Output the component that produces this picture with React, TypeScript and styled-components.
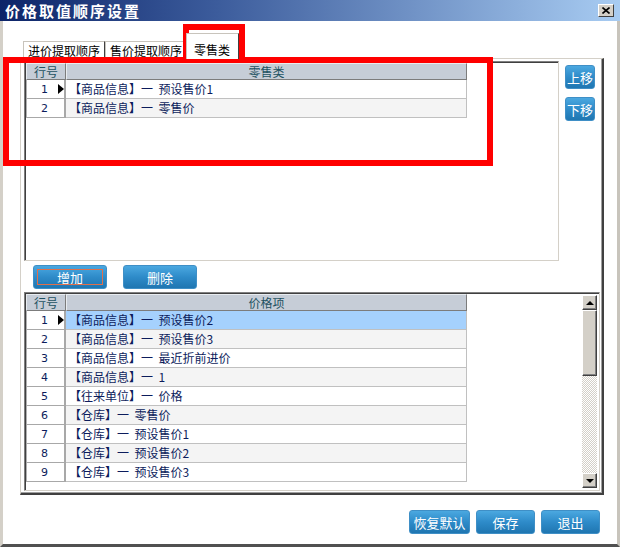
import React from 'react';
import styled, { createGlobalStyle } from 'styled-components';

const GlobalStyle = createGlobalStyle`
  html, body { margin: 0; padding: 0; background: #fff; }
  body {
    font-family: "Noto Sans CJK SC", "DejaVu Sans", sans-serif;
    font-size: 12px;
  }
  * { box-sizing: border-box; }
`;

const Window = styled.div`
  position: relative;
  width: 620px;
  height: 547px;
  background: #fff;
  display: flex;
  flex-direction: column;
  overflow: hidden;
`;

const TitleBar = styled.div`
  height: 21px;
  flex-shrink: 0;
  background: linear-gradient(to right, #0c2468 0%, #3c5c9c 35%, #a8ccf2 100%);
  display: flex;
  align-items: center;
  justify-content: space-between;
  padding: 0 6px 0 5px;
`;

const Title = styled.span`
  color: #fff;
  font-weight: bold;
  font-size: 15px;
  letter-spacing: 2px;
  line-height: 1;
  white-space: nowrap;
`;

const CloseButton = styled.div`
  width: 16px;
  height: 13px;
  background: #d4d0c8;
  border: 1px solid;
  border-color: #fff #404040 #404040 #fff;
  display: flex;
  align-items: center;
  justify-content: center;
`;

const Body = styled.div`
  flex: 1;
  display: flex;
  flex-direction: column;
  border-left: 3px solid #d4d0c8;
  border-right: 3px solid #c8c4bc;
  border-bottom: 3px solid #505050;
  padding-left: 17px;
`;

const TabStrip = styled.div`
  margin-top: 12px;
  height: 25px;
  display: flex;
  align-items: flex-end;
  padding-left: 3px;
`;

const Tab = styled.div<{ $active?: boolean; $w: number }>`
  position: relative;
  width: ${p => p.$w}px;
  height: ${p => (p.$active ? 26 : 17)}px;
  margin-bottom: ${p => (p.$active ? -1 : 0)}px;
  margin-left: ${p => (p.$active ? -1 : 0)}px;
  background: #fff;
  border-top: 1px solid #c8c4bc;
  border-left: 1px solid #c8c4bc;
  border-right: 1px solid #404040;
  color: #000;
  font-size: 12px;
  line-height: 15px;
  padding: ${p => (p.$active ? '8px 0 0 7px' : '1px 0 0 4px')};
  white-space: nowrap;
  overflow: hidden;
  z-index: ${p => (p.$active ? 1 : 0)};
`;

const TabPage = styled.div`
  width: 584px;
  height: 437px;
  border-top: 1px solid #d4d0c8;
  border-left: 1px solid #d4d0c8;
  border-right: 2px solid #404040;
  border-bottom: 2px solid #404040;
  box-shadow: inset -1px -1px #a0a0a0;
  padding: 2px 0 0 3px;
  display: flex;
  flex-direction: column;
`;

const UpperRow = styled.div`
  display: flex;
  gap: 6px;
`;

const SunkenBox = styled.div<{ $w: number; $h: number }>`
  width: ${p => p.$w}px;
  height: ${p => p.$h}px;
  background: #fff;
  border-top: 1px solid #808080;
  border-left: 1px solid #808080;
  border-right: 1px solid #d4d0c8;
  border-bottom: 1px solid #d4d0c8;
  box-shadow: inset 1px 1px #404040;
  padding: 1px;
  display: flex;
  justify-content: space-between;
`;

const SideButtons = styled.div`
  display: flex;
  flex-direction: column;
  gap: 8px;
  margin-top: 4px;
`;

const BlueButton = styled.div<{ $w: number }>`
  position: relative;
  width: ${p => p.$w}px;
  height: 24px;
  border-radius: 3px;
  border: 1px solid #3f8fc6;
  background: linear-gradient(to bottom, #4ba8e0 0%, #2e8bc9 50%, #1f76b1 100%);
  color: #fff;
  font-size: 13px;
  display: flex;
  align-items: center;
  justify-content: center;
  line-height: 1;
`;

const FocusRing = styled.span`
  position: absolute;
  left: 3px;
  top: 3px;
  width: 66px;
  height: 16px;
  border: 1px solid #e0704c;
  pointer-events: none;
`;

const ActionRow = styled.div`
  display: flex;
  gap: 16px;
  margin-top: 4px;
  padding-left: 9px;
`;

const LowerWrap = styled.div`
  margin-top: 3px;
`;

const Grid = styled.div`
  width: 441px;
  display: flex;
  flex-direction: column;
`;

const HeaderRow = styled.div`
  display: flex;
  height: 17px;
`;

const HeaderCell = styled.div<{ $w: number }>`
  width: ${p => p.$w}px;
  background: #c6cdd7;
  border-top: 1px solid #e8ecf0;
  border-left: 1px solid #e8ecf0;
  border-right: 1px solid #7c7c7c;
  border-bottom: 1px solid #7c7c7c;
  color: #1e5262;
  font-size: 12px;
  line-height: 15px;
  text-align: center;
`;

const Row = styled.div`
  display: flex;
  height: 19px;
`;

const NumCell = styled.div`
  width: 40px;
  display: flex;
  align-items: center;
  background: #fff;
  border-left: 1px solid #b0b0b0;
  border-right: 2px solid #a8a8a8;
  border-bottom: 1px solid #a8a8a8;
  color: #0c1c5c;
  font-family: "DejaVu Sans", sans-serif;
  font-size: 11px;
`;

const NumText = styled.span`
  width: 21px;
  text-align: right;
`;

const Pointer = styled.span`
  margin-left: 10px;
  width: 0;
  height: 0;
  border-top: 5px solid transparent;
  border-bottom: 5px solid transparent;
  border-left: 6px solid #000;
`;

const MainCell = styled.div<{ $bg: string }>`
  flex: 1;
  background: ${p => p.$bg};
  border-right: 1px solid #c0c0c0;
  border-bottom: 1px solid #c0c0c0;
  color: #0c1c5c;
  font-size: 12px;
  line-height: 18px;
  padding-left: 3px;
  white-space: pre;
`;

const ScrollBar = styled.div`
  width: 15px;
  margin: 1px 1px 1px 0;
  display: flex;
  flex-direction: column;
`;

const ScrollBtn = styled.div`
  height: 15px;
  background: #d4d0c8;
  border: 1px solid;
  border-color: #fff #404040 #404040 #fff;
  box-shadow: inset -1px -1px #808080;
  display: flex;
  align-items: center;
  justify-content: center;
`;

const Arrow = styled.span<{ $down?: boolean }>`
  width: 0;
  height: 0;
  border-left: 4px solid transparent;
  border-right: 4px solid transparent;
  ${p => (p.$down ? 'border-top: 4px solid #000;' : 'border-bottom: 4px solid #000;')}
`;

const Thumb = styled.div`
  height: 66px;
  background: #d4d0c8;
  border: 1px solid;
  border-color: #fff #404040 #404040 #fff;
  box-shadow: inset -1px -1px #808080;
`;

const Track = styled.div`
  flex: 1;
  background-color: #fff;
  background-image: repeating-conic-gradient(#d4d0c8 0% 25%, #fff 0% 50%);
  background-size: 2px 2px;
`;

const Footer = styled.div`
  display: flex;
  justify-content: flex-end;
  gap: 6px;
  margin-top: 15px;
  padding-right: 17px;
`;

const Mark = styled.div<{ $l: number; $t: number; $w: number; $h: number }>`
  position: absolute;
  left: ${p => p.$l}px;
  top: ${p => p.$t}px;
  width: ${p => p.$w}px;
  height: ${p => p.$h}px;
  border: 6px solid #ff0000;
  pointer-events: none;
`;

type Item = { group: string; name: string };

const retailItems: Item[] = [
  { group: '商品信息', name: '预设售价1' },
  { group: '商品信息', name: '零售价' },
];

const priceItems: Item[] = [
  { group: '商品信息', name: '预设售价2' },
  { group: '商品信息', name: '预设售价3' },
  { group: '商品信息', name: '最近折前进价' },
  { group: '商品信息', name: '1' },
  { group: '往来单位', name: '价格' },
  { group: '仓库', name: '零售价' },
  { group: '仓库', name: '预设售价1' },
  { group: '仓库', name: '预设售价2' },
  { group: '仓库', name: '预设售价3' },
];

const DataGrid = ({ title, items, highlight }: { title: string; items: Item[]; highlight?: boolean }) => (
  <Grid>
    <HeaderRow>
      <HeaderCell $w={40}>行号</HeaderCell>
      <HeaderCell $w={401}>{title}</HeaderCell>
    </HeaderRow>
    {items.map((it, i) => {
      const bg = i === 0 && highlight ? '#a5d1fd' : i % 2 === 1 ? '#f4f4f4' : '#fff';
      return (
        <Row key={i}>
          <NumCell>
            <NumText>{i + 1}</NumText>
            {i === 0 && <Pointer />}
          </NumCell>
          <MainCell $bg={bg}>{`【${it.group}】一  ${it.name}`}</MainCell>
        </Row>
      );
    })}
  </Grid>
);

const App = () => (
  <Window>
    <GlobalStyle />
    <TitleBar>
      <Title>价格取值顺序设置</Title>
      <CloseButton>
        <svg width="8" height="7" viewBox="0 0 8 7">
          <path d="M0.5 0.5 L7.5 6.5 M7.5 0.5 L0.5 6.5" stroke="#000" strokeWidth="1.6" />
        </svg>
      </CloseButton>
    </TitleBar>
    <Body>
      <TabStrip>
        <Tab $w={82}>进价提取顺序</Tab>
        <Tab $w={82}>售价提取顺序</Tab>
        <Tab $w={53} $active>零售类</Tab>
      </TabStrip>
      <TabPage>
        <UpperRow>
          <SunkenBox $w={535} $h={200}>
            <DataGrid title="零售类" items={retailItems} />
          </SunkenBox>
          <SideButtons>
            <BlueButton $w={30}>上移</BlueButton>
            <BlueButton $w={30}>下移</BlueButton>
          </SideButtons>
        </UpperRow>
        <ActionRow>
          <BlueButton $w={74}>
            增加
            <FocusRing />
          </BlueButton>
          <BlueButton $w={74}>删除</BlueButton>
        </ActionRow>
        <LowerWrap>
          <SunkenBox $w={576} $h={199}>
            <DataGrid title="价格项" items={priceItems} highlight />
            <ScrollBar>
              <ScrollBtn><Arrow /></ScrollBtn>
              <Thumb />
              <Track />
              <ScrollBtn><Arrow $down /></ScrollBtn>
            </ScrollBar>
          </SunkenBox>
        </LowerWrap>
      </TabPage>
      <Footer>
        <BlueButton $w={61}>恢复默认</BlueButton>
        <BlueButton $w={59}>保存</BlueButton>
        <BlueButton $w={59}>退出</BlueButton>
      </Footer>
    </Body>
    <Mark $l={183} $t={24} $w={62} $h={38} />
    <Mark $l={3} $t={57} $w={490} $h={109} />
  </Window>
);

export default App;
